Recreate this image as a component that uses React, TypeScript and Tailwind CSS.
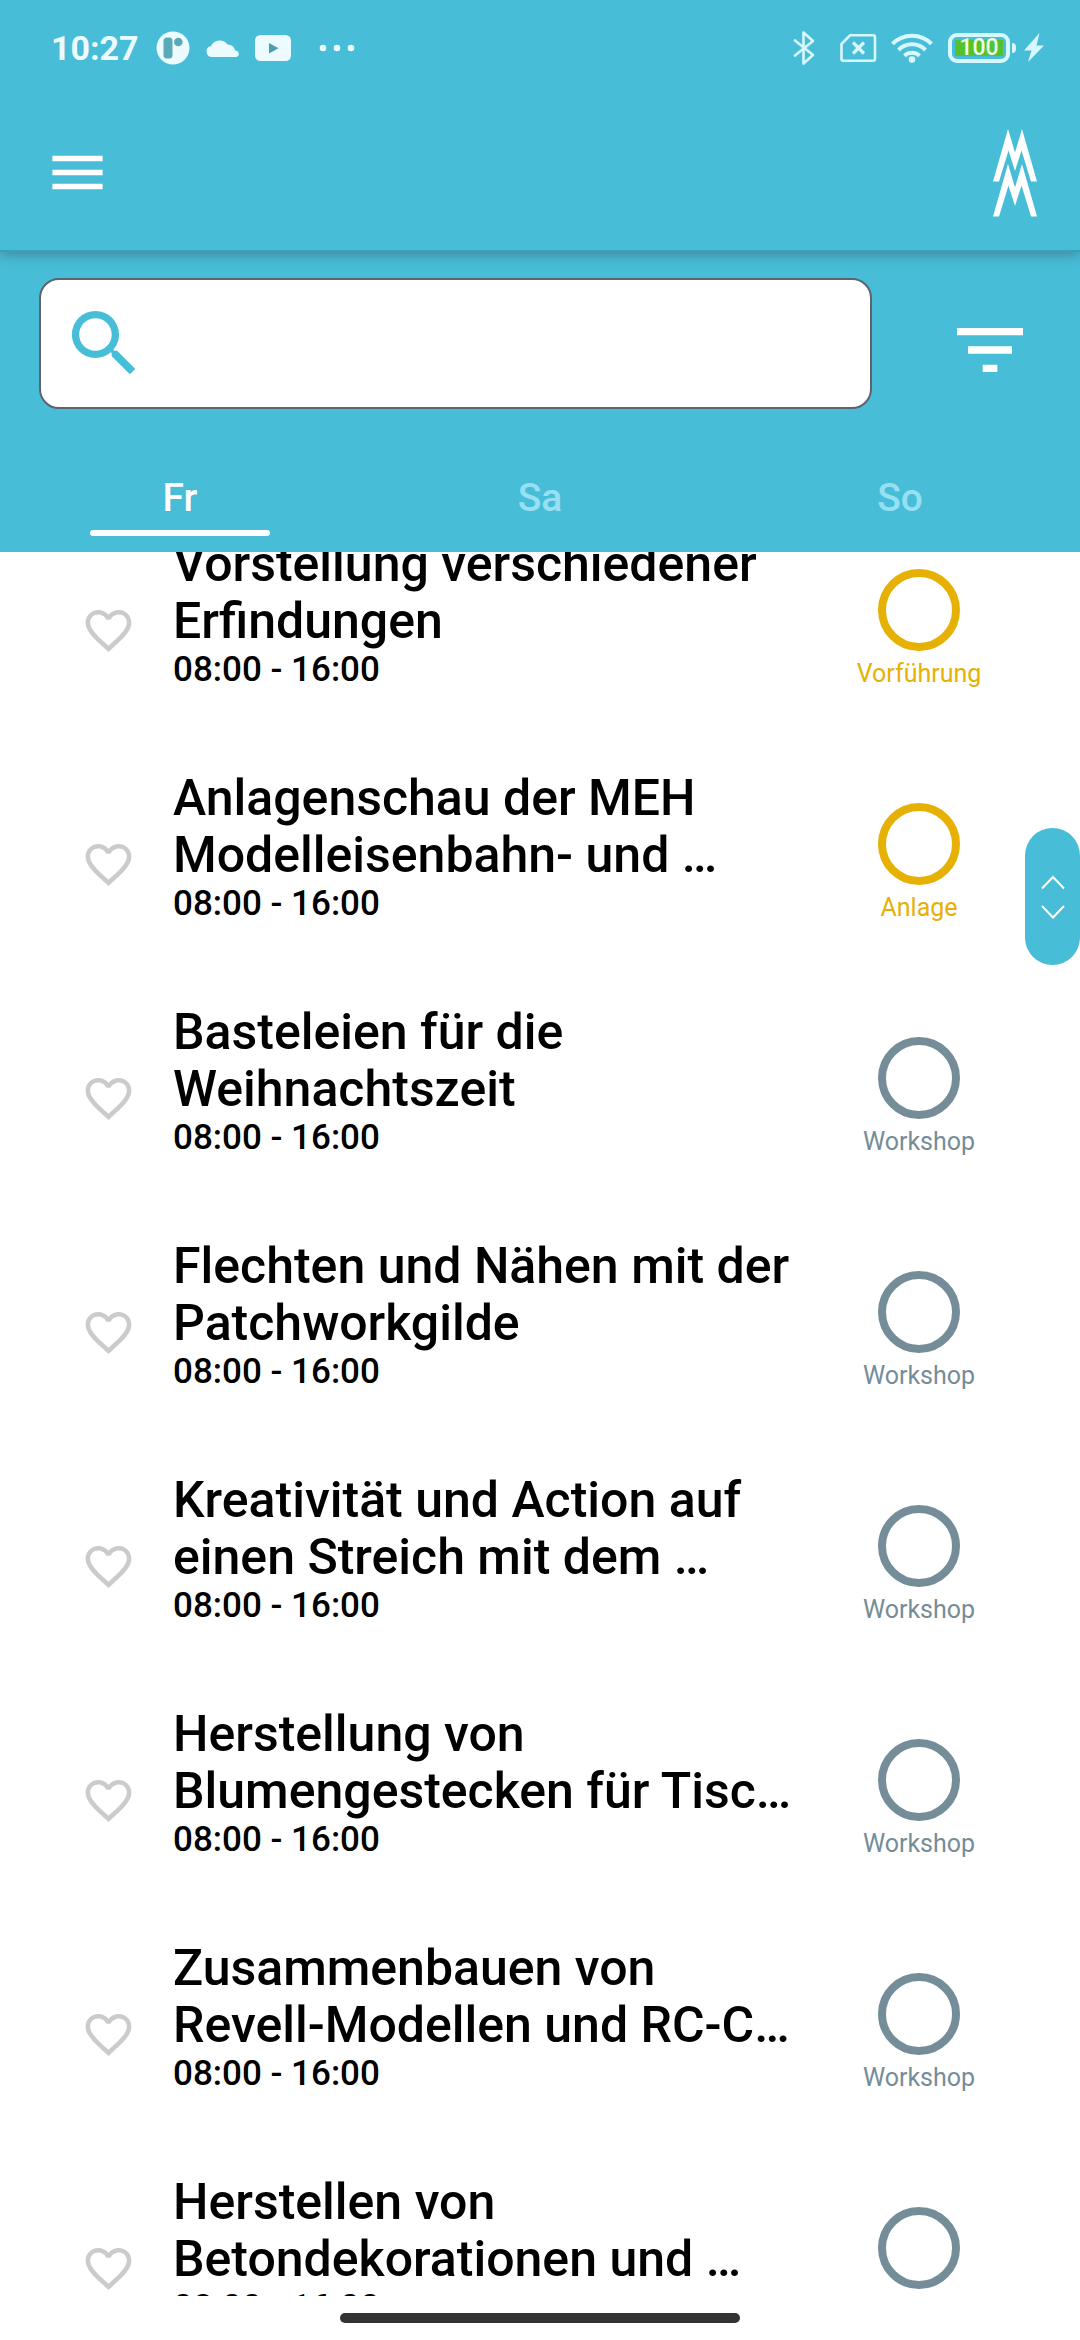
import { MdFavoriteBorder, MdFilterList, MdMenu, MdSearch } from "react-icons/md";

type Kind = "Vorführung" | "Anlage" | "Workshop";

const kindColor: Record<Kind, string> = {
  Vorführung: "text-[#e6b104]",
  Anlage: "text-[#e6b104]",
  Workshop: "text-[#748d98]",
};

const days = ["Fr", "Sa", "So"];

const events: { title: string; time: string; kind: Kind }[] = [
  { title: "Vorstellung verschiedener Erfindungen", time: "08:00 - 16:00", kind: "Vorführung" },
  { title: "Anlagenschau der MEH Modelleisenbahn- und …", time: "08:00 - 16:00", kind: "Anlage" },
  { title: "Basteleien für die Weihnachtszeit", time: "08:00 - 16:00", kind: "Workshop" },
  { title: "Flechten und Nähen mit der Patchworkgilde", time: "08:00 - 16:00", kind: "Workshop" },
  { title: "Kreativität und Action auf einen Streich mit dem …", time: "08:00 - 16:00", kind: "Workshop" },
  { title: "Herstellung von Blumengestecken für Tisc…", time: "08:00 - 16:00", kind: "Workshop" },
  { title: "Zusammenbauen von Revell-Modellen und RC-C…", time: "08:00 - 16:00", kind: "Workshop" },
  { title: "Herstellen von Betondekorationen und …", time: "08:00 - 16:00", kind: "Workshop" },
];

function StatusBar() {
  return (
    <div className="flex h-24 items-center justify-between pl-[51px] pr-9 text-[#ecfbff]">
      <div className="flex items-center">
        <span className="w-[105px] text-[34px] leading-10 font-bold">10:27</span>
        <svg className="h-[34px] w-[34px]" viewBox="0 0 34 34" aria-hidden="true">
          <circle cx="17" cy="17" r="16.5" fill="currentColor" />
          <rect x="7.5" y="6.5" width="9" height="21" rx="3.5" fill="#5aa9b8" />
          <circle cx="22.300" cy="11" r="4.300" fill="#5aa9b8" />
        </svg>
        <svg className="ml-4 h-5 w-[34px]" viewBox="0 0 34 20" fill="currentColor" aria-hidden="true">
          <path d="M6 19a5.500 5.500 0 0 1-1-10.900A9.500 9.500 0 0 1 21.500 6.500 7 7 0 0 1 29 12.600 3.300 3.300 0 0 1 30.500 19Z" />
        </svg>
        <svg className="ml-[15px] h-[26px] w-9" viewBox="0 0 36 26" aria-hidden="true">
          <rect width="36" height="26" rx="5.500" fill="currentColor" />
          <path d="M14 8v10.500l9.500-5.200Z" fill="#4a9fae" />
        </svg>
        <svg className="ml-7 h-2 w-9" viewBox="0 0 36 8" fill="currentColor" aria-hidden="true">
          <circle cx="4" cy="4" r="3.300" />
          <circle cx="18" cy="4" r="3.300" />
          <circle cx="32" cy="4" r="3.300" />
        </svg>
      </div>
      <div className="flex items-center text-[#d8f8ff]">
        <svg className="h-9 w-6" viewBox="0 0 24 36" fill="none" stroke="currentColor" strokeWidth="2.600" strokeLinejoin="round" strokeLinecap="round" aria-hidden="true">
          <path d="m3 10.500 18 14.500-9.500 8.500v-31L21 11 3 25.500" />
        </svg>
        <svg className="ml-[23px] h-[30px] w-[38px]" viewBox="0 0 38 30" fill="none" stroke="currentColor" strokeWidth="2.600" strokeLinejoin="round" aria-hidden="true">
          <path d="M11 2.300h23a2 2 0 0 1 2 2v21.400a2 2 0 0 1-2 2H4.500a2 2 0 0 1-2-2V11Z" />
          <path d="m14 9.500 11 11M25 9.500 14 20.500" strokeWidth="3.200" />
        </svg>
        <svg className="ml-[13px] h-8 w-[44px]" viewBox="0 0 44 32" fill="none" stroke="currentColor" strokeWidth="4" aria-hidden="true">
          <path d="M2.500 11.800a27.500 27.500 0 0 1 39 0" />
          <path d="M8.500 18a19 19 0 0 1 27 0" />
          <path d="M14.500 23.700a11 11 0 0 1 15 0" />
          <circle cx="22" cy="27.500" r="3.300" fill="currentColor" stroke="none" />
        </svg>
        <div className="ml-[14px] flex h-[30px] w-[62px] rounded-[9px] border-4 border-current p-[3px]">
          <span className="flex flex-1 items-center justify-center bg-[#54c12f] text-[23px] leading-4 font-medium text-[#e9ffe9]">100</span>
        </div>
        <span className="ml-[2px] h-[10px] w-1 rounded-r-sm bg-current" />
        <svg className="ml-2 h-[30px] w-5" viewBox="0 0 20 30" fill="currentColor" aria-hidden="true">
          <path d="M15.500 0 0 17.500h7.500L4 29 20 12.500h-7.500Z" />
        </svg>
      </div>
    </div>
  );
}

function Logo() {
  return (
    <svg className="h-[88px] w-11" viewBox="0 0 44 88" fill="#fff" role="img" aria-label="MM">
      <path d="M0 52.500 15 0 22 23.500 29 0 44 52.500H38L28.500 21.500 22 42 15.500 21.500 6 52.500Z" />
      <path d="M0 87.500 15 35 22 58.500 29 35 44 87.500H38L28.500 56.500 22 77 15.500 56.500 6 87.500Z" />
    </svg>
  );
}

export default function App() {
  return (
    <div className="relative flex h-screen flex-col overflow-hidden bg-white font-['Roboto',sans-serif] text-black">
      <header className="relative z-10 shrink-0 bg-[#47bdd8] shadow-[0_2px_0_#36a2ba,0_4px_12px_rgba(60,70,80,0.5)]">
        <StatusBar />
        <div className="flex h-[154px] items-start justify-between pr-[43px] pl-11">
          <button type="button" aria-label="Menü" className="mt-[43px] text-[67px] text-white">
            <MdMenu />
          </button>
          <div className="mt-[33px]">
            <Logo />
          </div>
        </div>
      </header>

      <section className="relative z-0 shrink-0 bg-[#47bdd8] pt-7">
        <div className="flex items-center pr-[46px] pl-[39px]">
          <label className="flex h-[131px] flex-1 items-start rounded-[20px] border-2 border-[#5d646b] bg-white pt-5 pl-5">
            <MdSearch className="shrink-0 text-[87px] text-[#47bdd8]" />
            <input type="search" aria-label="Suche" className="h-[87px] min-w-0 flex-1 bg-transparent px-4 text-[40px] outline-none" />
          </label>
          <button type="button" aria-label="Filter" className="ml-[74px] mt-3 text-[88px] text-white">
            <MdFilterList />
          </button>
        </div>
        <div role="tablist" className="mt-[61px] flex h-[82px]">
          {days.map((day, i) => (
            <button
              key={day}
              type="button"
              role="tab"
              aria-selected={i === 0}
              className={`flex flex-1 flex-col items-center text-[39px] leading-[56px] font-medium ${i === 0 ? "text-white" : "text-[#97e0f2]"}`}
            >
              {day}
              {i === 0 && <span className="mt-1 h-[6px] w-1/2 rounded-full bg-white" />}
            </button>
          ))}
        </div>
      </section>

      <main className="min-h-0 flex-1 overflow-hidden">
        <ul className="-mt-14">
          {events.map((event) => (
            <li key={event.title} className="flex h-[234px] items-start pt-10 pr-[71px] pl-[81px]">
              <button type="button" aria-label="Als Favorit merken" className="mt-[67px] text-[55px] text-[#cbcbcb]">
                <MdFavoriteBorder />
              </button>
              <div className="ml-[37px] min-w-0 flex-1 pr-9">
                <h2 className="text-[50px] leading-[57px] font-medium">{event.title}</h2>
                <p className="text-[35px] leading-10 font-medium">{event.time}</p>
              </div>
              <div className={`mt-[33px] flex w-[180px] flex-col items-center ${kindColor[event.kind]}`}>
                <span className="h-[82px] w-[82px] rounded-full border-8 border-current" />
                <span className="mt-[9px] text-[25px] leading-7">{event.kind}</span>
              </div>
            </li>
          ))}
        </ul>
      </main>

      <footer className="flex h-11 shrink-0 justify-center bg-white pt-[17px]">
        <span className="h-[10px] w-[400px] rounded-full bg-[#333]" />
      </footer>

      <button
        type="button"
        aria-label="Scrollen"
        className="absolute top-[828px] right-0 z-20 flex h-[137px] w-[55px] flex-col items-center justify-center rounded-full bg-[#47bdd8] text-white"
      >
        <svg className="h-[44px] w-6" viewBox="0 0 24 44" fill="none" stroke="currentColor" strokeWidth="2" aria-hidden="true">
          <path d="m1 13.500 11-11.500 11 11.500M1 31l11 11.500L23 31" />
        </svg>
      </button>
    </div>
  );
}
